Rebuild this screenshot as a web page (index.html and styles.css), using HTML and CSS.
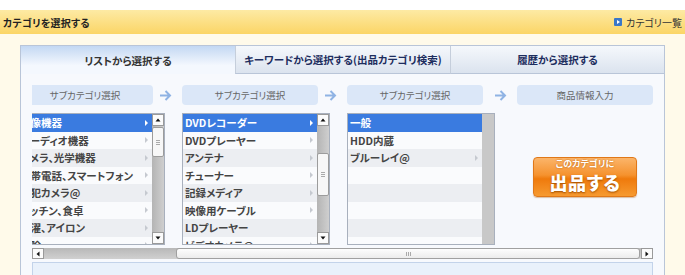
FILE: index.html
```html
<!DOCTYPE html>
<html lang="ja">
<head>
<meta charset="utf-8">
<link rel="stylesheet" href="styles.css">
</head>
<body>
<div class="page">
  <div class="topgap"></div>
  <header class="bar">
    <div class="bar-title">カテゴリを選択する</div>
    <a class="bar-link"><span class="tri-icon"></span>カテゴリ一覧</a>
  </header>
  <div class="main">
    <div class="panel">
      <div class="tabs">
        <div class="tab active">リストから選択する</div>
        <div class="tab">キーワードから選択する(出品カテゴリ検索)</div>
        <div class="tab">履歴から選択する</div>
      </div>
      <div class="body">
        <div class="viewport">
          <div class="track">
            <div class="heads">
              <div class="hbox">サブカテゴリ選択</div>
              <div class="arrow a1"><svg width="13" height="11" viewBox="0 0 13 11"><path d="M1 5.5H11M6.5 1L11 5.5L6.5 10" fill="none" stroke="#8fb3e4" stroke-width="2"/></svg></div>
              <div class="hbox">サブカテゴリ選択</div>
              <div class="arrow a1"><svg width="13" height="11" viewBox="0 0 13 11"><path d="M1 5.5H11M6.5 1L11 5.5L6.5 10" fill="none" stroke="#8fb3e4" stroke-width="2"/></svg></div>
              <div class="hbox">サブカテゴリ選択</div>
              <div class="arrow a2"><svg width="13" height="11" viewBox="0 0 13 11"><path d="M1 5.5H11M6.5 1L11 5.5L6.5 10" fill="none" stroke="#8fb3e4" stroke-width="2"/></svg></div>
              <div class="hbox">商品情報入力</div>
            </div>
            <div class="lists">
              <div class="list">
                <ul class="rows">
                  <li class="sel">映像機器<i></i></li>
                  <li>オーディオ機器<i></i></li>
                  <li class="alt">カメラ、光学機器<i></i></li>
                  <li>携帯電話、スマートフォン<i></i></li>
                  <li class="alt">防犯カメラ@<i></i></li>
                  <li>キッチン、食卓<i></i></li>
                  <li class="alt">洗濯、アイロン<i></i></li>
                  <li>掃除<i></i></li>
                </ul>
                <div class="vscroll">
                  <div class="vbtn"><svg width="10" height="10" viewBox="0 0 10 10"><path d="M2.5 6.5H7.5L5 3.5Z" fill="#111"/></svg></div>
                  <div class="vtrack"><div class="vthumb t1"><span class="grip"></span></div></div>
                  <div class="vbtn"><svg width="10" height="10" viewBox="0 0 10 10"><path d="M2.5 3.5H7.5L5 6.5Z" fill="#111"/></svg></div>
                </div>
              </div>
              <div class="list">
                <ul class="rows">
                  <li class="sel">DVDレコーダー<i></i></li>
                  <li>DVDプレーヤー<i></i></li>
                  <li class="alt">アンテナ<i></i></li>
                  <li>チューナー<i></i></li>
                  <li class="alt">記録メディア<i></i></li>
                  <li>映像用ケーブル<i></i></li>
                  <li class="alt">LDプレーヤー</li>
                  <li>ビデオカメラ@<i></i></li>
                </ul>
                <div class="vscroll">
                  <div class="vbtn"><svg width="10" height="10" viewBox="0 0 10 10"><path d="M2.5 6.5H7.5L5 3.5Z" fill="#111"/></svg></div>
                  <div class="vtrack"><div class="vthumb t2"><span class="grip"></span></div></div>
                  <div class="vbtn"><svg width="10" height="10" viewBox="0 0 10 10"><path d="M2.5 3.5H7.5L5 6.5Z" fill="#111"/></svg></div>
                </div>
              </div>
              <div class="list">
                <ul class="rows">
                  <li class="sel">一般</li>
                  <li>HDD内蔵</li>
                  <li class="alt">ブルーレイ@<i></i></li>
                  <li></li>
                  <li class="alt"></li>
                  <li></li>
                  <li class="alt"></li>
                  <li></li>
                </ul>
                <div class="vscroll off"></div>
              </div>
              <div class="action">
                <button class="go"><span class="go-s">このカテゴリに</span><span class="go-l">出品する</span></button>
              </div>
            </div>
          </div>
        </div>
        <div class="hscroll">
          <div class="hbtn"><svg width="10" height="10" viewBox="0 0 10 10"><path d="M6.5 2.5V7.5L3.5 5Z" fill="#111"/></svg></div>
          <div class="htrack"><div class="hthumb"><span class="hgrip"></span></div></div>
          <div class="hbtn"><svg width="10" height="10" viewBox="0 0 10 10"><path d="M3.5 2.5V7.5L6.5 5Z" fill="#111"/></svg></div>
        </div>
        <div class="infobox"></div>
      </div>
    </div>
  </div>
</div>
</body>
</html>
```
FILE: styles.css
```css
* { box-sizing: border-box; }
html, body { margin: 0; padding: 0; }
body {
  font-family: "Noto Sans CJK JP", "Noto Sans", sans-serif;
  font-feature-settings: "palt";
  background: #fffaea;
  color: #333;
  width: 685px;
  height: 275px;
  overflow: hidden;
}
.topgap { height: 10px; background: #fff; }
.bar {
  height: 24px;
  display: flex;
  align-items: center;
  justify-content: space-between;
  padding: 0 3px 0 3px;
  background: linear-gradient(#fdeaa4, #fbd566);
}
.bar-title { font-size: 10px; font-weight: 700; color: #222; letter-spacing: 0.2px; }
.bar-link { font-size: 10px; color: #333; display: flex; align-items: center; gap: 4px; }
.tri-icon {
  width: 8px; height: 8px; background: #3a77c8; border-radius: 1px;
  position: relative; display: inline-block;
}
.tri-icon::after {
  content: ""; position: absolute; left: 3px; top: 1.5px;
  border-left: 3px solid #fff; border-top: 2.5px solid transparent; border-bottom: 2.5px solid transparent;
}
.main { padding: 11px 0 0 20px; }
.panel {
  width: 645px;
  height: 240px;
  border: 1px solid #b9c5d8;
  border-bottom: none;
  background: #f7f9fd;
}
.tabs { display: flex; height: 28px; }
.tab {
  flex: none;
  display: flex; align-items: center; justify-content: center;
  font-size: 10.5px; font-weight: 700; color: #1d2d5e;
  background: linear-gradient(#f5f8fc, #dbe3ee);
  border-bottom: 1px solid #b9c5d8;
  border-left: 1px solid #c5cedb;
}
.tab:nth-child(1) { width: 214px; }
.tab:nth-child(2) { width: 215px; }
.tab:nth-child(3) { width: 214px; }
.tab.active {
  background: linear-gradient(#c3d8f3, #f4f8fe 70%);
  color: #333;
  border: none;
}
.body { padding: 11px 10px 0 11px; }
.viewport { width: 621px; overflow: hidden; }
.track { margin-left: -14px; width: 660px; }
.heads { display: flex; height: 20px; margin-left: -1px; }
.hbox {
  width: 136px; flex: none;
  background: #dbe7f8;
  border-radius: 4px;
  font-size: 9.5px; color: #666;
  display: flex; align-items: center; justify-content: center;
}
.arrow { flex: none; display: flex; align-items: center; justify-content: center; }
.arrow.a1 { width: 29px; padding-right: 4px; }
.arrow.a2 { width: 34px; }
.lists { display: flex; margin-top: 8px; gap: 17px; height: 132px; margin-left: -1px; }
.list {
  width: 148px; flex: none; height: 132px;
  border: 1px solid #a8b0bd;
  background: #fafbfd;
  display: flex;
  overflow: hidden;
}
.rows { list-style: none; margin: 0; padding: 0; width: 134px; flex: none; }
.rows li {
  height: 17.5px;
  display: flex; align-items: center; justify-content: space-between;
  padding: 0 4px 0 2px;
  font-size: 10.5px; font-weight: 700; color: #444;
  white-space: nowrap;
  background: #fafbfd;
}
.rows li.alt { background: #eceef2; }
.rows li.sel { background: #3a7be0; color: #fff; }
.rows li i {
  width: 0; height: 0; flex: none;
  border-left: 3px solid #c5c9d0; border-top: 3px solid transparent; border-bottom: 3px solid transparent;
}
.rows li.sel i { border-left-color: #fff; }
.vscroll {
  width: 12px; flex: none; display: flex; flex-direction: column;
  background: #c4c4c4;
}
.vscroll.off { background: #c8c8c8; }
.vbtn {
  height: 12px; flex: none; background: #fbfbfb; border: 1px solid #9a9a9a;
  display: flex; align-items: center; justify-content: center;
}
.vtrack { flex: 1; position: relative; background: linear-gradient(90deg, #b4b4b4, #cfcfcf); }
.vthumb {
  position: absolute; left: 0; right: 0;
  background: #f7f7f7; border: 1px solid #9c9c9c; border-radius: 2px;
  display: flex; align-items: center; justify-content: center;
}
.vthumb.t1 { top: 1px; height: 30px; }
.vthumb.t2 { top: 27px; height: 43px; }
.grip { width: 4px; height: 5px; border-top: 1px solid #aaa; border-bottom: 1px solid #aaa; position: relative; }
.grip::after { content: ""; position: absolute; left: 0; right: 0; top: 1px; border-top: 1px solid #aaa; }
.action { width: 136px; flex: none; margin-left: 5px; display: flex; align-items: center; justify-content: center; padding-bottom: 5px; }
.go {
  width: 104px; height: 40px;
  border: 1px solid #e07818;
  border-radius: 4px;
  background: linear-gradient(#fbb56a, #f5922e 45%, #ef7a0c 55%, #f69a30);
  box-shadow: 0 1px 1px rgba(160, 80, 0, 0.35);
  color: #fff;
  display: flex; flex-direction: column; align-items: center; justify-content: center;
  padding: 0; font-family: inherit; font-feature-settings: "palt";
  overflow: hidden;
}
.go-s { font-size: 9px; line-height: 12px; font-weight: 700; text-shadow: 0 0 2px #b75a00; }
.go-l { font-size: 18px; line-height: 25px; font-weight: 900; text-shadow: 0 1px 2px #a04e00; letter-spacing: 0.5px; }
.hscroll {
  margin-top: 3px; height: 11px; width: 621px;
  display: flex; background: #c4c4c4;
}
.hbtn {
  width: 12px; flex: none; background: #fbfbfb; border: 1px solid #9a9a9a;
  display: flex; align-items: center; justify-content: center;
}
.htrack { flex: 1; position: relative; background: linear-gradient(#b8b8b8, #d0d0d0); }
.hthumb {
  position: absolute; top: 0; bottom: 0; left: 132px; right: 1px;
  background: linear-gradient(#fdfdfd, #ececec); border: 1px solid #a0a0a0; border-radius: 3px;
  display: flex; align-items: center; justify-content: center;
}
.hgrip { width: 5px; height: 4px; border-left: 1px solid #aaa; border-right: 1px solid #aaa; position: relative; }
.hgrip::after { content: ""; position: absolute; top: 0; bottom: 0; left: 1px; border-left: 1px solid #aaa; }
.infobox {
  margin-top: 3px; width: 621px; height: 20px;
  background: #e9f1fb; border: 1px solid #c3d3ea;
}
```
